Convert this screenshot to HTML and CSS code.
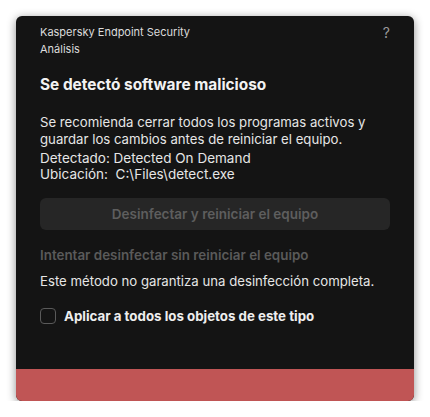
FILE: index.html
```html
<!DOCTYPE html>
<html lang="es">
<head>
    <meta charset="UTF-8">
    <title>Kaspersky Endpoint Security</title>
    <link rel="stylesheet" href="styles.css">
</head>
<body>
    <div class="window">
        <div class="content">
            <div class="app-header">
                <div class="app-titles">
                    <div class="app-name">Kaspersky Endpoint Security</div>
                    <div class="app-task">Análisis</div>
                </div>
                <span class="help">?</span>
            </div>
            <h1>Se detectó software malicioso</h1>
            <p class="advice">Se recomienda cerrar todos los programas activos y guardar los cambios antes de reiniciar el equipo.</p>
            <div class="details">
                <div>Detectado: Detected On Demand</div>
                <div>Ubicación:&nbsp; C:\Files\detect.exe</div>
            </div>
            <button class="main-button" disabled>Desinfectar y reiniciar el equipo</button>
            <a class="link-disabled">Intentar desinfectar sin reiniciar el equipo</a>
            <p class="note">Este método no garantiza una desinfección completa.</p>
            <label class="check">
                <span class="box"></span>
                <span class="check-label">Aplicar a todos los objetos de este tipo</span>
            </label>
        </div>
        <div class="footer"></div>
    </div>
</body>
</html>
```

FILE: styles.css
```css
body {
    margin: 0;
    background-color: #fff;
    font-family: Inter, "Noto Sans", sans-serif;
}
.window {
    margin: 16px 0 0 16px;
    width: 398px;
    height: 385px;
    background-color: #141414;
    border-radius: 6px;
    box-shadow: 0 2px 10px rgba(0,0,0,0.45);
    display: flex;
    flex-direction: column;
    overflow: hidden;
}
.content {
    flex: 1;
    padding: 8px 24px 0 24px;
    color: #e6e6e6;
}
.app-header {
    display: flex;
    justify-content: space-between;
    font-size: 11px;
    line-height: 17px;
    color: #dcdcdc;
}
.help {
    font-size: 14px;
    color: #9a9a9a;
}
h1 {
    margin: 16px 0 0 0;
    font-size: 15.4px;
    line-height: 22px;
    font-weight: 700;
    color: #f2f2f2;
}
.advice {
    margin: 18px 0 0 0;
    font-size: 13.2px;
    line-height: 17px;
}
.details {
    margin-top: 2px;
    font-size: 13.5px;
    line-height: 16px;
}
.main-button {
    display: block;
    width: 100%;
    height: 32px;
    margin-top: 16px;
    background-color: #262626;
    color: #5e5e5e;
    border: none;
    border-radius: 6px;
    font-family: inherit;
    font-size: 13.5px;
    font-weight: 600;
}
.link-disabled {
    display: block;
    margin-top: 16px;
    font-size: 13.4px;
    line-height: 18px;
    font-weight: 600;
    color: #5a5a5a;
}
.note {
    margin: 8px 0 0 0;
    font-size: 13.2px;
    line-height: 18px;
}
.check {
    display: flex;
    align-items: center;
    gap: 8px;
    margin-top: 18px;
}
.box {
    width: 14px;
    height: 14px;
    border: 1px solid #5a5a5a;
    border-radius: 4px;
}
.check-label {
    font-size: 13.3px;
    font-weight: 700;
    color: #eeeeee;
}
.footer {
    height: 32px;
    background-color: #c05555;
}
```
